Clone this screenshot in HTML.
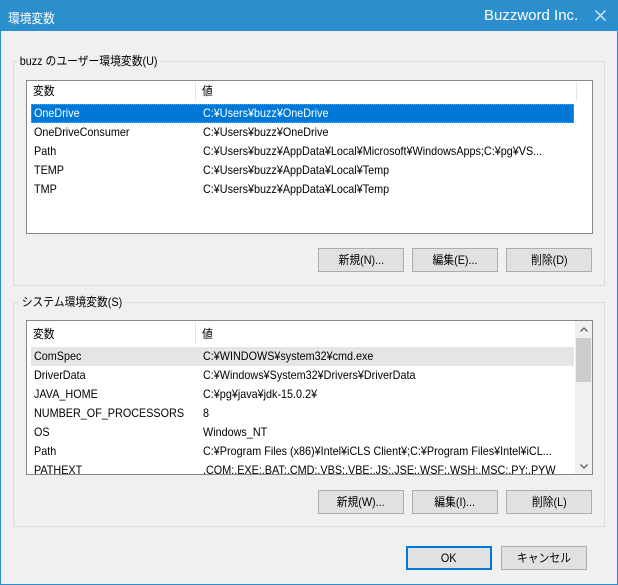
<!DOCTYPE html>
<html><head><meta charset="utf-8"><style>
*{margin:0;padding:0;box-sizing:border-box}
body{width:618px;height:585px;overflow:hidden;background:#f0f0f0;font-family:"Liberation Sans","Noto Sans CJK JP",sans-serif;font-size:12px;color:#000;position:relative}
.frame{position:absolute;left:0;top:0;width:618px;height:585px;border:1px solid #2b8fce;border-top:none}
.title{position:absolute;left:0;top:0;width:618px;height:31px;background:#2b8fce;color:#fff}
.abs{position:absolute;white-space:nowrap}
.t{display:inline-block;transform:scaleX(.9);transform-origin:left center;white-space:nowrap}
.group{position:absolute;border:1px solid #dcdcdc}
.glabel{position:absolute;background:#f0f0f0;padding:0 3px;line-height:14px;transform:scaleX(.9);transform-origin:left center;white-space:nowrap}
.list{position:absolute;background:#fff;border:1px solid #828790;overflow:hidden}
.row{position:absolute;left:4px;height:19px;line-height:19px;width:543px}
.row span{position:absolute;left:3px}
.row span+span{left:172px}
.btn{position:absolute;width:86px;height:24px;border:1px solid #adadad;background:#e1e1e1;text-align:center;line-height:22px}
.btn .t{transform-origin:center}
</style></head><body>
<div class="title">
<div class="abs" style="left:8px;top:8px;font-size:13px"><span class="t">環境変数</span></div>
<div class="abs" style="left:484px;top:7px;font-size:15px">Buzzword Inc.</div>
<svg class="abs" style="left:595px;top:10px" width="11" height="11" viewBox="0 0 11 11"><path d="M0.5 0.5L10.5 10.5M10.5 0.5L0.5 10.5" stroke="#fff" stroke-width="1.2"/></svg>
</div>
<div class="frame"></div>

<div class="group" style="left:13px;top:61px;width:592px;height:225px"></div>
<div class="glabel" style="left:17px;top:54px">buzz のユーザー環境変数(U)</div>
<div class="list" style="left:26px;top:80px;width:567px;height:154px">
<div class="abs" style="left:3px;top:0;height:20px;line-height:20px;width:545px"><span class="abs t" style="left:3px">変数</span><span class="abs t" style="left:172px">値</span></div>
<div class="abs" style="left:168px;top:1px;width:1px;height:19px;background:#e5e5e5"></div>
<div class="abs" style="left:549px;top:1px;width:1px;height:19px;background:#e5e5e5"></div>
<div class="row" style="top:23px;background:#0078d7;color:#fff;outline:1px dotted #e08a3a;outline-offset:-1px"><span class="t">OneDrive</span><span class="t">C:¥Users¥buzz¥OneDrive</span></div>
<div class="row" style="top:42px"><span class="t">OneDriveConsumer</span><span class="t">C:¥Users¥buzz¥OneDrive</span></div>
<div class="row" style="top:61px"><span class="t">Path</span><span class="t">C:¥Users¥buzz¥AppData¥Local¥Microsoft¥WindowsApps;C:¥pg¥VS...</span></div>
<div class="row" style="top:80px"><span class="t">TEMP</span><span class="t">C:¥Users¥buzz¥AppData¥Local¥Temp</span></div>
<div class="row" style="top:99px"><span class="t">TMP</span><span class="t">C:¥Users¥buzz¥AppData¥Local¥Temp</span></div>
</div>
<div class="btn" style="left:318px;top:248px"><span class="t">新規(N)...</span></div>
<div class="btn" style="left:412px;top:248px"><span class="t">編集(E)...</span></div>
<div class="btn" style="left:506px;top:248px"><span class="t">削除(D)</span></div>

<div class="group" style="left:13px;top:302px;width:592px;height:225px"></div>
<div class="glabel" style="left:19px;top:295px">システム環境変数(S)</div>
<div class="list" style="left:26px;top:320px;width:567px;height:155px">
<div class="abs" style="left:3px;top:3px;height:20px;line-height:20px;width:545px"><span class="abs t" style="left:3px">変数</span><span class="abs t" style="left:172px">値</span></div>
<div class="abs" style="left:168px;top:1px;width:1px;height:22px;background:#e5e5e5"></div>
<div class="row" style="top:26px;background:#e5e5e5"><span class="t">ComSpec</span><span class="t">C:¥WINDOWS¥system32¥cmd.exe</span></div>
<div class="row" style="top:45px"><span class="t">DriverData</span><span class="t">C:¥Windows¥System32¥Drivers¥DriverData</span></div>
<div class="row" style="top:64px"><span class="t">JAVA_HOME</span><span class="t">C:¥pg¥java¥jdk-15.0.2¥</span></div>
<div class="row" style="top:83px"><span class="t">NUMBER_OF_PROCESSORS</span><span class="t">8</span></div>
<div class="row" style="top:102px"><span class="t">OS</span><span class="t">Windows_NT</span></div>
<div class="row" style="top:121px"><span class="t">Path</span><span class="t">C:¥Program Files (x86)¥Intel¥iCLS Client¥;C:¥Program Files¥Intel¥iCL...</span></div>
<div class="row" style="top:140px"><span class="t">PATHEXT</span><span class="t">.COM;.EXE;.BAT;.CMD;.VBS;.VBE;.JS;.JSE;.WSF;.WSH;.MSC;.PY;.PYW</span></div>
<div class="abs" style="left:548px;top:0;width:17px;height:153px;background:#f0f0f0"></div>
<div class="abs" style="left:549px;top:17px;width:15px;height:44px;background:#cdcdcd"></div>
<svg class="abs" style="left:553px;top:6px" width="8" height="5" viewBox="0 0 8 5"><path d="M0.5 4.5L4 1L7.5 4.5" stroke="#606060" stroke-width="1.3" fill="none"/></svg>
<svg class="abs" style="left:553px;top:143px" width="8" height="5" viewBox="0 0 8 5"><path d="M0.5 0.5L4 4L7.5 0.5" stroke="#606060" stroke-width="1.3" fill="none"/></svg>
</div>
<div class="btn" style="left:318px;top:490px"><span class="t">新規(W)...</span></div>
<div class="btn" style="left:412px;top:490px"><span class="t">編集(I)...</span></div>
<div class="btn" style="left:506px;top:490px"><span class="t">削除(L)</span></div>

<div class="btn" style="left:406px;top:546px;border:2px solid #0078d7;line-height:20px"><span class="t">OK</span></div>
<div class="btn" style="left:501px;top:546px"><span class="t">キャンセル</span></div>
</body></html>
